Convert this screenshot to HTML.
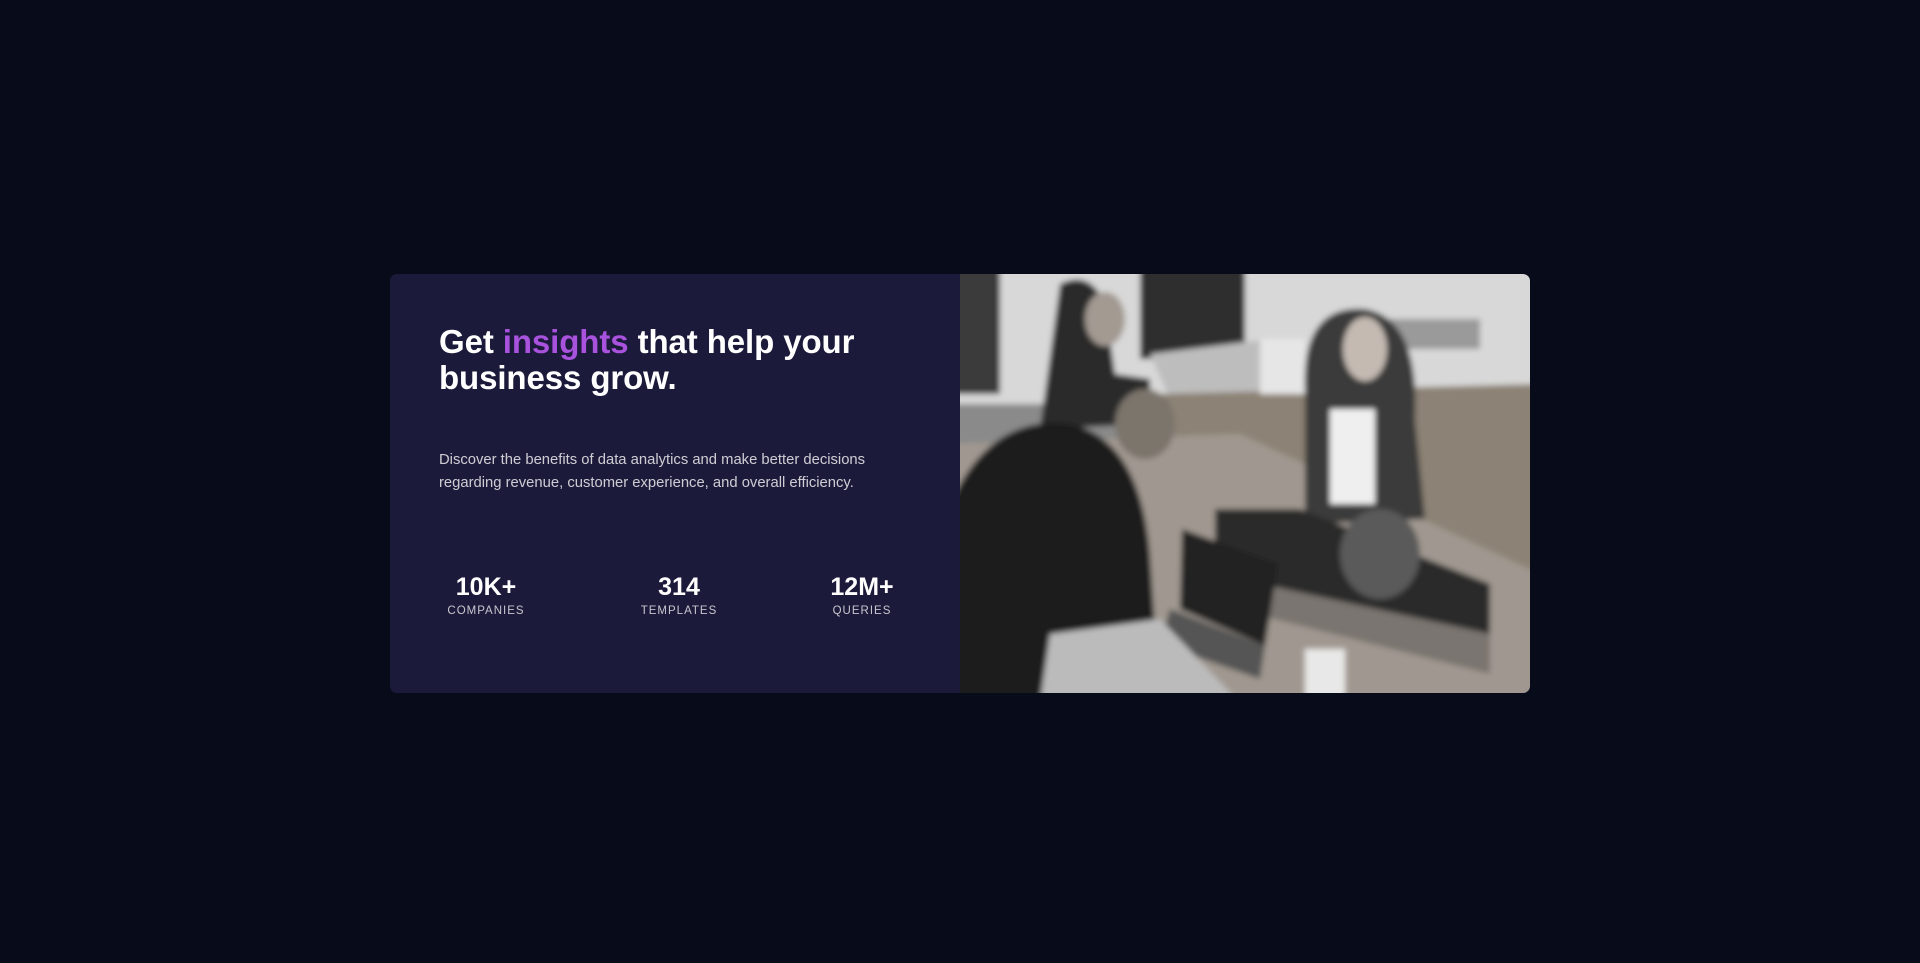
<!DOCTYPE html>
<html><head><meta charset="utf-8"><style>
html,body{margin:0;padding:0;background:#080b1a;width:1920px;height:963px;overflow:hidden;font-family:"Liberation Sans",sans-serif}
.card{position:absolute;left:390px;top:274px;width:1140px;height:419px;background:#1c1a3a;border-radius:7px;overflow:hidden}
h1{position:absolute;left:49px;top:50px;margin:0;font-size:33px;line-height:36px;color:#fff;font-weight:700;letter-spacing:-0.1px}
h1 span{color:#a952de}
p{position:absolute;left:49px;top:175px;margin:0;width:480px;font-size:14.8px;line-height:23px;color:rgba(255,255,255,.78)}
.s{position:absolute;top:298px;text-align:center;color:#fff;transform:translateX(-50%)}
.s b{display:block;font-size:25px;line-height:30px}
.s i{display:block;font-style:normal;font-size:11.5px;letter-spacing:1px;color:rgba(255,255,255,.75);margin-top:3px}
svg{position:absolute;left:570px;top:0}
</style></head><body>
<div class="card">
<h1>Get <span>insights</span> that help your<br>business grow.</h1>
<p>Discover the benefits of data analytics and make better decisions regarding revenue, customer experience, and overall efficiency.</p>
<div class="s" style="left:96px"><b>10K+</b><i>COMPANIES</i></div>
<div class="s" style="left:289px"><b>314</b><i>TEMPLATES</i></div>
<div class="s" style="left:472px"><b>12M+</b><i>QUERIES</i></div>
<svg width="570" height="419" viewBox="0 0 570 419">
<defs><filter id="b"><feGaussianBlur stdDeviation="3"/></filter></defs>
<g filter="url(#b)">
<rect x="-10" y="-10" width="590" height="440" fill="#8a8a8a"/>
<rect x="-10" y="-10" width="590" height="140" fill="#d8d8d8"/>
<rect x="-10" y="-10" width="50" height="130" fill="#3a3a3a"/>
<rect x="180" y="-10" width="105" height="95" fill="#2e2e2e"/>
<polygon points="190,80 310,65 310,120 210,125" fill="#bdbdbd"/>
<polygon points="200,120 580,110 580,330 230,200" fill="#8c8275"/>
<polygon points="-10,170 280,160 580,300 580,430 -10,430" fill="#a09890"/>
<rect x="300" y="65" width="45" height="55" fill="#e6e6e6"/>
<rect x="420" y="45" width="100" height="30" fill="#9a9a9a"/>
<path d="M100,10 q30,-15 45,20 l10,70 l35,5 l0,45 l-110,5 z" fill="#2a2a2a"/>
<ellipse cx="145" cy="45" rx="20" ry="27" fill="#a39a92"/>
<path d="M345,120 q-5,-90 60,-85 q55,10 50,110 l10,100 l-120,5 z" fill="#3a3a3a"/>
<ellipse cx="405" cy="75" rx="22" ry="32" fill="#c4bab2"/>
<rect x="370" y="135" width="45" height="95" fill="#efefef"/>
<polygon points="255,235 340,235 530,310 530,360 255,300" fill="#2c2c2c"/>
<polygon points="255,300 530,360 530,400 255,330" fill="#7a7570"/>
<polygon points="222,255 318,290 305,372 220,335" fill="#222"/>
<polygon points="210,335 305,372 300,405 200,370" fill="#555"/>
<path d="M-10,230 q40,-90 120,-80 q70,15 80,130 l10,150 l-210,0 z" fill="#1d1d1d"/>
<path d="M90,360 l110,-15 l80,84 l-200,0 z" fill="#bbb"/>
<rect x="345" y="375" width="40" height="54" fill="#e8e8e8"/>
<ellipse cx="185" cy="150" rx="30" ry="35" fill="#7c746c"/>
<ellipse cx="420" cy="280" rx="40" ry="45" fill="#5a5a5a"/>
</g>
</svg>
</div>
</body></html>
